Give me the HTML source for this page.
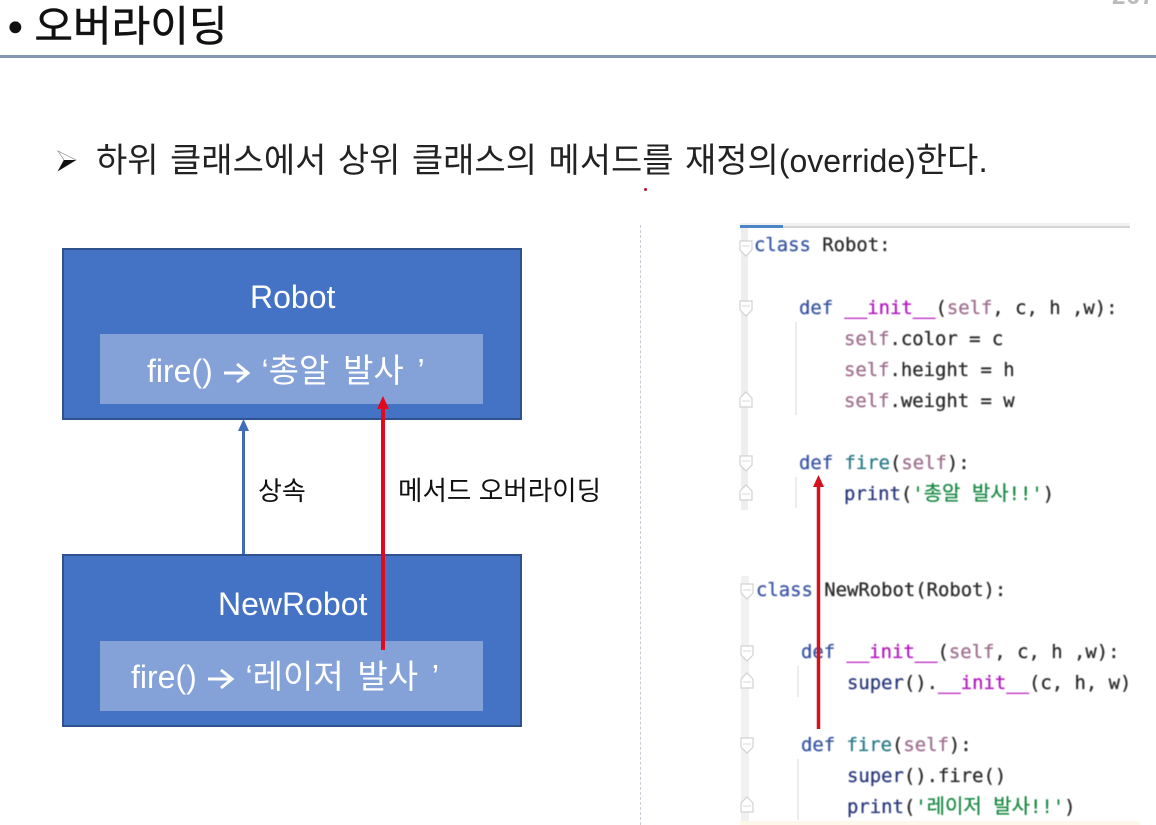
<!DOCTYPE html>
<html lang="ko">
<head>
<meta charset="utf-8">
<style>
html,body{margin:0;padding:0;background:#fff;}
#p{position:relative;width:1156px;height:825px;overflow:hidden;background:#fff;font-family:"Liberation Sans","Noto Sans CJK KR",sans-serif;}
.a{position:absolute;white-space:pre;}
.sh{filter:blur(.35px);}
.c{position:absolute;white-space:pre;font-family:"DejaVu Sans Mono","Noto Sans CJK KR",monospace;font-size:18.9px;line-height:24px;height:24px;color:#2b2b2b;filter:blur(.45px);-webkit-text-stroke:.3px currentColor;}
.k{color:#3a57a5}.s{color:#a0708f}.i{color:#b51bc0;text-decoration:none}.f{color:#2c7c8c}.b{color:#2d3a80}.g{color:#1c8a45;}
.h{font-family:"Noto Sans CJK KR",sans-serif;font-size:20px;}
.box{position:absolute;left:62px;width:456px;background:#4472c4;border:2px solid #2f528f;}
.in{position:absolute;left:100px;width:383px;height:70px;background:#84a1d8;}
.w{color:#fff;font-size:32px;line-height:40px;}
.w b{font-weight:normal;font-size:33px;word-spacing:4.500px;}
.w svg{display:inline-block;vertical-align:-3px;}
</style>
</head>
<body>
<div id="p">
<div class="a" style="left:1112px;top:-13px;font-size:24px;font-weight:bold;color:#bbb;line-height:20px;letter-spacing:1px">267</div>
<div class="a sh" style="left:8px;top:2px;font-size:42px;line-height:50px;color:#111;-webkit-text-stroke:.5px #111">• 오버라이딩</div>
<div style="position:absolute;left:0;top:55px;width:1156px;height:3px;background:#8496b0"></div>

<svg class="a" style="left:56px;top:150px" width="24" height="24" viewBox="0 0 24 24"><path d="M2 1 L20 10 L2 21 L8 10 Z" fill="#fff" stroke="#777" stroke-width=".6"/><path d="M2 21 L20 10 L8 10 Z" fill="#111"/></svg>
<div class="a sh" style="left:96px;top:139px;font-size:34px;line-height:44px;color:#222;word-spacing:2px">하위 클래스에서 상위 클래스의 메서드를 재정의<span style="font-size:32px">(override)</span>한다.</div>
<div style="position:absolute;left:644px;top:188px;width:3px;height:3px;background:#c0102a;border-radius:2px"></div>
<div style="position:absolute;left:640px;top:225px;height:600px;border-left:1.5px dashed #c8ccd4"></div>

<div class="box" style="top:248px;height:168px"></div>
<div class="in" style="top:334px"></div>
<div class="a w sh" style="left:250px;top:277px">Robot</div>
<div class="a w sh" style="left:147px;top:351px">fire() <svg width="31" height="24" viewBox="0 0 31 24"><path d="M2 12H25M15 3L26 12L15 21" fill="none" stroke="#fff" stroke-width="3"/></svg> ‘<b>총알 발사 ’</b></div>

<div class="box" style="top:554px;height:169px"></div>
<div class="in" style="top:641px"></div>
<div class="a w sh" style="left:218px;top:584px">NewRobot</div>
<div class="a w sh" style="left:131px;top:657px">fire() <svg width="31" height="24" viewBox="0 0 31 24"><path d="M2 12H25M15 3L26 12L15 21" fill="none" stroke="#fff" stroke-width="3"/></svg> ‘<b>레이저 발사 ’</b></div>

<svg class="a" style="left:0;top:0" width="1156" height="825">
<path d="M243.500 554V428" stroke="#3f6db8" stroke-width="3" fill="none"/>
<path d="M243.500 419L249 431H238Z" fill="#3f6db8"/>
<path d="M383 650V405" stroke="#e3081f" stroke-width="4" fill="none"/>
<path d="M383 396L389 409H377Z" fill="#e3081f"/>
</svg>
<div class="a sh" style="left:258px;top:474px;font-size:26px;line-height:34px;color:#111">상속</div>
<div class="a sh" style="left:398px;top:474px;font-size:26.600px;line-height:34px;color:#111">메서드 오버라이딩</div>

<!-- code panel -->
<svg class="a" style="left:0;top:0" width="1156" height="825">
<rect x="740" y="223" width="390" height="5" fill="#f0f0f0"/>
<rect x="740" y="226" width="390" height="2" fill="#d4d4d4"/>
<rect x="740" y="225" width="43" height="3" fill="#4a86c8"/>
<rect x="741" y="228" width="7" height="282" fill="#eeeeee"/>
<rect x="741" y="576" width="8" height="249" fill="#f1f1f1"/>
<rect x="740" y="821" width="400" height="4" fill="#fdf8ea"/>
<g fill="#fff" stroke="#d2d2d2" stroke-width="1.200">
<path d="M740 241H752V250L746 256L740 250Z"/>
<path d="M740 301H752V310L746 316L740 310Z"/>
<path d="M740 407H752V398L746 392L740 398Z"/>
<path d="M740 456H752V465L746 471L740 465Z"/>
<path d="M740 500H752V491L746 485L740 491Z"/>
<path d="M741 584H753V593L747 599L741 593Z"/>
<path d="M741 646H753V655L747 661L741 655Z"/>
<path d="M741 688H753V679L747 673L741 679Z"/>
<path d="M741 738H753V747L747 753L741 747Z"/>
<path d="M741 812H753V803L747 797L741 803Z"/>
</g>
<g stroke="#d8d8d8" stroke-width="1">
<path d="M742 246H750M742 306H750M742 401H750M742 461H750M742 494H750M743 590H751M743 651H751M743 682H751M743 744H751M743 806H751"/>
</g>
<g stroke="#e6e6e6" stroke-width="1.500">
<path d="M796 322V415M796 477V508M798 666V697M798 759V820"/>
</g>
</svg>

<div class="c" style="left:754px;top:233px"><span class="k">class</span> Robot:</div>
<div class="c" style="left:799px;top:296px"><span class="k">def</span> <span class="i">__init__</span>(<span class="s">self</span>, c, h ,w):</div>
<div class="c" style="left:844px;top:327px"><span class="s">self</span>.color = c</div>
<div class="c" style="left:844px;top:358px"><span class="s">self</span>.height = h</div>
<div class="c" style="left:844px;top:389px"><span class="s">self</span>.weight = w</div>
<div class="c" style="left:799px;top:451px"><span class="k">def</span> <span class="f">fire</span>(<span class="s">self</span>):</div>
<div class="c" style="left:844px;top:480px"><span class="b">print</span>(<span class="g">'<span class="h">총알</span> <span class="h">발사</span>!!'</span>)</div>

<div class="c" style="left:756px;top:578px"><span class="k">class</span> NewRobot(Robot):</div>
<div class="c" style="left:801px;top:640px"><span class="k">def</span> <span class="i">__init__</span>(<span class="s">self</span>, c, h ,w):</div>
<div class="c" style="left:847px;top:671px"><span class="b">super</span>().<span class="i">__init__</span>(c, h, w)</div>
<div class="c" style="left:801px;top:733px"><span class="k">def</span> <span class="f">fire</span>(<span class="s">self</span>):</div>
<div class="c" style="left:847px;top:764px"><span class="b">super</span>().fire()</div>
<div class="c" style="left:847px;top:793px"><span class="b">print</span>(<span class="g">'<span class="h">레이저</span> <span class="h">발사</span>!!'</span>)</div>

<svg class="a" style="left:0;top:0" width="1156" height="825">
<path d="M818.500 729V484" stroke="#d8101c" stroke-width="3.500" fill="none"/>
<path d="M818.500 475L824 487H813Z" fill="#d8101c"/>
</svg>
</div>
</body>
</html>
